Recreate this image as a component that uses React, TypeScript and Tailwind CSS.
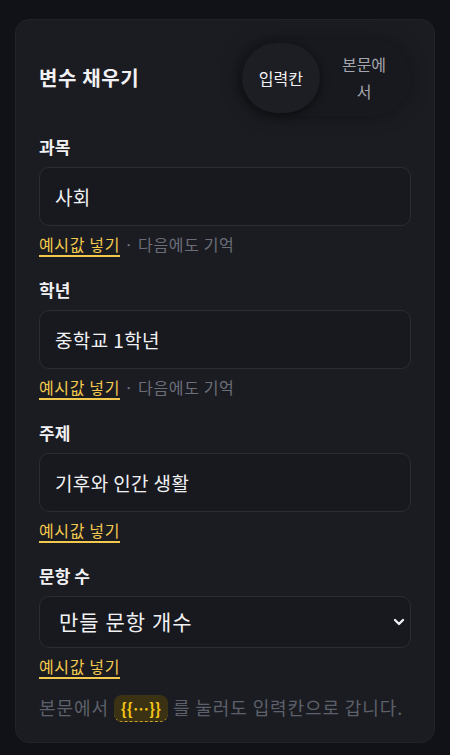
import { ChevronDown } from "lucide-react";

const FIELDS = [
  { label: "과목", value: "사회", remember: true },
  { label: "학년", value: "중학교 1학년", remember: true },
  { label: "주제", value: "기후와 인간 생활", remember: false },
];

function Helper({ remember }: { remember: boolean }) {
  return (
    <p className="mt-2 text-[16px] leading-5 tracking-[0.04em] text-[#6b6e78]">
      <a className="text-[#f2c94c] underline decoration-[#f2c94c] decoration-[1.5px] underline-offset-[4px]">
        예시값 넣기
      </a>
      {remember && <span> · 다음에도 기억</span>}
    </p>
  );
}

export default function App() {
  return (
    <div
      className="min-h-screen bg-[#111217] pt-[19px] pb-[10px]"
      style={{ fontFamily: '"Noto Sans CJK KR", "Noto Sans", sans-serif' }}
    >
      <div className="mx-[15px] rounded-[14px] border border-[#22232a] bg-[#1b1c22] px-[23px] pt-[20px] pb-[20px]">
        {/* header */}
        <div className="flex items-center justify-between">
          <h2 className="text-[20px] font-bold tracking-[0.03em] text-[#f1f1f3]">변수 채우기</h2>
          <div className="flex rounded-full bg-[#18191e] p-[3px] shadow-[0_0_18px_rgba(0,0,0,0.35)]">
            <button className="rounded-full bg-[#1d1e24] px-[17px] py-2 text-[16px] leading-[27px] text-[#f1f1f3] shadow-[0_2px_8px_rgba(0,0,0,0.55)]">
              입력칸
            </button>
            <button className="w-[88px] px-[20px] py-2 text-[16px] leading-[27px] text-[#a4a6ae]">
              본문에서
            </button>
          </div>
        </div>

        {/* fields */}
        <div className="mt-5 flex flex-col gap-[25px]">
          {FIELDS.map((f) => (
            <div key={f.label}>
              <label className="block text-[17px] font-bold leading-[22px] text-[#f1f1f3]">
                {f.label}
              </label>
              <input
                defaultValue={f.value}
                className="mt-[9px] h-[59px] w-full rounded-[10px] border border-[#2b2c34] bg-[#18191f] px-[15px] text-[19px] tracking-[0.02em] text-[#f1f1f3] outline-none"
              />
              <Helper remember={f.remember} />
            </div>
          ))}

          <div>
            <label className="block text-[17px] font-bold leading-[22px] text-[#f1f1f3]">문항 수</label>
            <div className="relative mt-[9px]">
              <select className="h-[52px] w-full appearance-none rounded-[10px] border border-[#2b2c34] bg-[#18191f] px-[19px] text-[21px] tracking-[0.05em] text-[#f1f1f3] outline-none">
                <option>만들 문항 개수</option>
              </select>
              <ChevronDown
                size={16}
                strokeWidth={3.5}
                className="pointer-events-none absolute right-[4px] top-1/2 -translate-y-1/2 text-[#f1f1f3]"
              />
            </div>
            <Helper remember={false} />
          </div>
        </div>

        {/* footer hint */}
        <p className="mt-[19px] whitespace-nowrap text-[18px] leading-6 tracking-[0.05em] text-[#5d606a]">
          본문에서{" "}
          <span className="inline-block rounded-lg border-b border-dashed border-[#c9a227] bg-[#3a3212] px-[7px] text-[16px] font-bold leading-[26px] tracking-normal text-[#f5c518]">
            {"{{…}}"}
          </span>{" "}
          를 눌러도 입력칸으로 갑니다.
        </p>
      </div>
    </div>
  );
}
